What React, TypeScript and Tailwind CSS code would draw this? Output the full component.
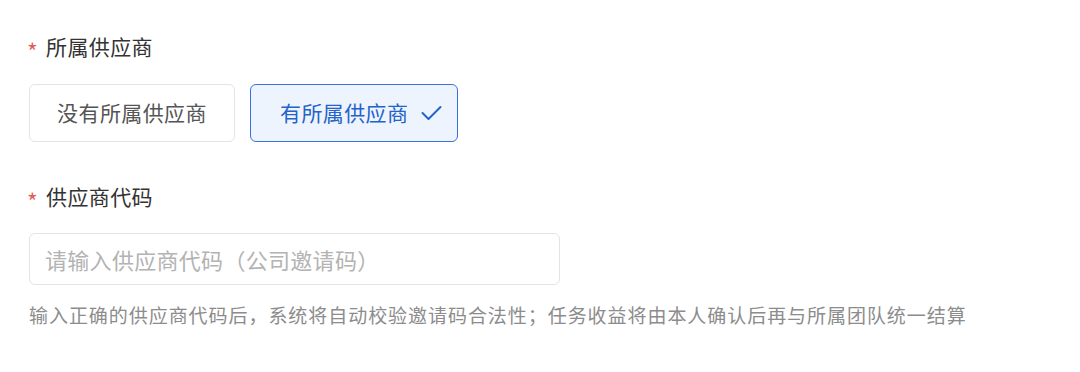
const font = { fontFamily: '"Noto Sans CJK SC", "Noto Sans", sans-serif' };

function Label({ text }: { text: string }) {
  return (
    <div className="flex items-center h-[28px] text-[21px] tracking-[0.4px] text-[#333333]">
      <span className="text-[23px] text-[#e35f5a] w-[17px] leading-none pt-[8px] -ml-[2px] mr-[2px]">*</span>
      <span>{text}</span>
    </div>
  );
}

export default function App() {
  return (
    <div className="w-[1080px] h-[372px] bg-white pl-[29px] pt-[33px]" style={font}>
      <Label text="所属供应商" />
      <div className="flex gap-[15px] mt-[23px]">
        <button className="h-[58px] w-[206px] rounded-[6px] border border-[#e3e3e3] bg-white text-[21px] tracking-[0.4px] text-[#555555] flex items-center justify-center">
          没有所属供应商
        </button>
        <button className="h-[58px] w-[208px] rounded-[6px] border-[1.5px] border-[#3b72d9] bg-[#eef4fe] text-[21px] tracking-[0.4px] text-[#2463c8] flex items-center pl-[29px]">
          <span>有所属供应商</span>
          <svg className="ml-[13px]" width="21" height="16" viewBox="0 0 21 16" fill="none">
            <path d="M1.5 8 L7.5 14 L19.5 2" stroke="#2463c8" strokeWidth="2" strokeLinecap="round" strokeLinejoin="round" />
          </svg>
        </button>
      </div>
      <div className="mt-[41px]">
        <Label text="供应商代码" />
      </div>
      <div className="mt-[22px] w-[531px] h-[52px] rounded-[6px] border border-[#e3e3e3] flex items-center pl-[15px] text-[22px] tracking-[0.3px] text-[#b3b3b3]">
        请输入供应商代码（公司邀请码）
      </div>
      <div className="mt-[18px] h-[24px] leading-[24px] text-[19px] tracking-[0.95px] text-[#8c8c8c]">
        输入正确的供应商代码后，系统将自动校验邀请码合法性；任务收益将由本人确认后再与所属团队统一结算
      </div>
    </div>
  );
}
